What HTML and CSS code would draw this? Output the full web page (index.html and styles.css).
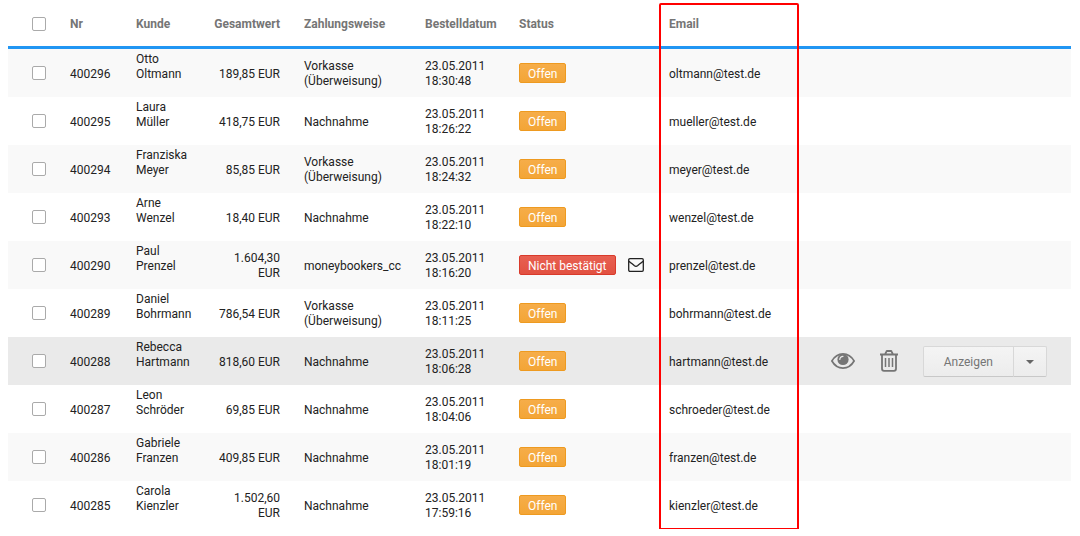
FILE: index.html
```html
<!DOCTYPE html>
<html lang="de">

<head>
    <meta charset="UTF-8">
    <meta name="viewport" content="width=device-width, initial-scale=1.0">
    <title>Bestellungen</title>
    <link rel="stylesheet" href="styles.css">
</head>

<body>
    <main class="orders">
        <table class="orders-table">
            <colgroup>
                <col class="col-check">
                <col class="col-nr">
                <col class="col-customer">
                <col class="col-total">
                <col class="col-payment">
                <col class="col-date">
                <col class="col-status">
                <col class="col-email">
                <col class="col-actions">
            </colgroup>
            <thead>
                <tr>
                    <th class="check"><input type="checkbox" aria-label="Alle auswählen"></th>
                    <th>Nr</th>
                    <th>Kunde</th>
                    <th class="total">Gesamtwert</th>
                    <th>Zahlungsweise</th>
                    <th>Bestelldatum</th>
                    <th>Status</th>
                    <th>Email</th>
                    <th></th>
                </tr>
            </thead>
            <tbody>
                <tr>
                    <td class="check"><input type="checkbox" aria-label="400296"></td>
                    <td>400296</td>
                    <td class="customer">Otto<br>Oltmann</td>
                    <td class="total">189,85 EUR</td>
                    <td>Vorkasse (Überweisung)</td>
                    <td>23.05.2011 18:30:48</td>
                    <td class="status-cell"><span class="badge badge-warning">Offen</span></td>
                    <td>oltmann@test.de</td>
                    <td></td>
                </tr>
                <tr>
                    <td class="check"><input type="checkbox" aria-label="400295"></td>
                    <td>400295</td>
                    <td class="customer">Laura<br>Müller</td>
                    <td class="total">418,75 EUR</td>
                    <td>Nachnahme</td>
                    <td>23.05.2011 18:26:22</td>
                    <td class="status-cell"><span class="badge badge-warning">Offen</span></td>
                    <td>mueller@test.de</td>
                    <td></td>
                </tr>
                <tr>
                    <td class="check"><input type="checkbox" aria-label="400294"></td>
                    <td>400294</td>
                    <td class="customer">Franziska<br>Meyer</td>
                    <td class="total">85,85 EUR</td>
                    <td>Vorkasse (Überweisung)</td>
                    <td>23.05.2011 18:24:32</td>
                    <td class="status-cell"><span class="badge badge-warning">Offen</span></td>
                    <td>meyer@test.de</td>
                    <td></td>
                </tr>
                <tr>
                    <td class="check"><input type="checkbox" aria-label="400293"></td>
                    <td>400293</td>
                    <td class="customer">Arne<br>Wenzel</td>
                    <td class="total">18,40 EUR</td>
                    <td>Nachnahme</td>
                    <td>23.05.2011 18:22:10</td>
                    <td class="status-cell"><span class="badge badge-warning">Offen</span></td>
                    <td>wenzel@test.de</td>
                    <td></td>
                </tr>
                <tr>
                    <td class="check"><input type="checkbox" aria-label="400290"></td>
                    <td>400290</td>
                    <td class="customer">Paul<br>Prenzel</td>
                    <td class="total">1.604,30 EUR</td>
                    <td>moneybookers_cc</td>
                    <td>23.05.2011 18:16:20</td>
                    <td class="status-cell">
                        <div class="status">
                            <span class="badge badge-danger">Nicht bestätigt</span>
                            <svg class="icon-mail" viewBox="0 0 16 14" aria-hidden="true">
                                <rect x="0.7" y="0.7" width="14.6" height="12.6" rx="1.2" />
                                <path d="M1 3.200C3 5 4.600 6.200 6.200 7.600C7.400 8.600 8.600 8.600 9.800 7.600C11.400 6.200 13 5 15 3.200" />
                            </svg>
                        </div>
                    </td>
                    <td>prenzel@test.de</td>
                    <td></td>
                </tr>
                <tr>
                    <td class="check"><input type="checkbox" aria-label="400289"></td>
                    <td>400289</td>
                    <td class="customer">Daniel<br>Bohrmann</td>
                    <td class="total">786,54 EUR</td>
                    <td>Vorkasse (Überweisung)</td>
                    <td>23.05.2011 18:11:25</td>
                    <td class="status-cell"><span class="badge badge-warning">Offen</span></td>
                    <td>bohrmann@test.de</td>
                    <td></td>
                </tr>
                <tr class="active">
                    <td class="check"><input type="checkbox" aria-label="400288"></td>
                    <td>400288</td>
                    <td class="customer">Rebecca<br>Hartmann</td>
                    <td class="total">818,60 EUR</td>
                    <td>Nachnahme</td>
                    <td>23.05.2011 18:06:28</td>
                    <td class="status-cell"><span class="badge badge-warning">Offen</span></td>
                    <td>hartmann@test.de</td>
                    <td class="actions-cell">
                        <div class="actions">
                            <a class="action" href="#" aria-label="Ansehen">
                                <svg class="icon-eye" viewBox="0 0 24 16" aria-hidden="true">
                                    <path class="line" d="M0.900 8C3.500 3.500 7.500 0.900 12 0.900S20.500 3.500 23.100 8C20.500 12.500 16.500 15.100 12 15.100S3.500 12.500 0.900 8Z" />
                                    <circle cx="12" cy="6.500" r="5.600" />
                                    <path class="shine" d="M8.800 6.500A3.200 3.200 0 0 1 12 3.300" />
                                </svg>
                            </a>
                            <a class="action" href="#" aria-label="Löschen">
                                <svg class="icon-trash" viewBox="0 0 20 22" aria-hidden="true">
                                    <path d="M1 4.500H19M6.200 4.200L7.200 1.800Q7.500 1 8.300 1H11.700Q12.500 1 12.800 1.800L13.800 4.200M3 4.500V18.800Q3 20.800 5 20.800H15Q17 20.800 17 18.800V4.500" />
                                    <path class="bars" d="M6.500 8V17M10 8V17M13.500 8V17" />
                                </svg>
                            </a>
                            <div class="btn-group">
                                <button class="btn" type="button">Anzeigen</button>
                                <button class="btn btn-toggle" type="button" aria-label="Mehr Aktionen"><span class="caret"></span></button>
                            </div>
                        </div>
                    </td>
                </tr>
                <tr>
                    <td class="check"><input type="checkbox" aria-label="400287"></td>
                    <td>400287</td>
                    <td class="customer">Leon<br>Schröder</td>
                    <td class="total">69,85 EUR</td>
                    <td>Nachnahme</td>
                    <td>23.05.2011 18:04:06</td>
                    <td class="status-cell"><span class="badge badge-warning">Offen</span></td>
                    <td>schroeder@test.de</td>
                    <td></td>
                </tr>
                <tr>
                    <td class="check"><input type="checkbox" aria-label="400286"></td>
                    <td>400286</td>
                    <td class="customer">Gabriele<br>Franzen</td>
                    <td class="total">409,85 EUR</td>
                    <td>Nachnahme</td>
                    <td>23.05.2011 18:01:19</td>
                    <td class="status-cell"><span class="badge badge-warning">Offen</span></td>
                    <td>franzen@test.de</td>
                    <td></td>
                </tr>
                <tr>
                    <td class="check"><input type="checkbox" aria-label="400285"></td>
                    <td>400285</td>
                    <td class="customer">Carola<br>Kienzler</td>
                    <td class="total">1.502,60 EUR</td>
                    <td>Nachnahme</td>
                    <td>23.05.2011 17:59:16</td>
                    <td class="status-cell"><span class="badge badge-warning">Offen</span></td>
                    <td>kienzler@test.de</td>
                    <td></td>
                </tr>
            </tbody>
        </table>
        <div class="highlight"></div>
    </main>
</body>

</html>
```
FILE: styles.css
```css
* {
    box-sizing: border-box;
}

body {
    margin: 0;
    background: #fff;
    color: #222;
    font-family: Roboto, "Liberation Sans", sans-serif;
    font-size: 12px;
    line-height: 15px;
}

.orders {
    position: relative;
    margin: 0 9px 0 8px;
}

.orders-table {
    width: 100%;
    table-layout: fixed;
    border-collapse: separate;
    border-spacing: 0;
}

.col-check {
    width: 50px;
}

.col-nr {
    width: 66px;
}

.col-customer {
    width: 78px;
}

.col-total {
    width: 90px;
}

.col-payment {
    width: 121px;
}

.col-date {
    width: 94px;
}

.col-status,
.col-email {
    width: 150px;
}

th,
td {
    padding: 2px 12px 0;
    text-align: left;
    vertical-align: middle;
}

th {
    height: 49px;
    border-bottom: 3px solid #2196f3;
    color: #757575;
    font-weight: bold;
}

td {
    height: 48px;
}

tbody tr:nth-child(odd) {
    background: #f9f9f9;
}

tbody tr.active {
    background: #eaeaea;
}

.check {
    padding: 0 0 0 24px;
}

th.check {
    padding-top: 2px;
}

.check input {
    display: block;
    appearance: none;
    width: 14px;
    height: 14px;
    margin: 0;
    border: 1px solid #aaa;
    border-radius: 2px;
    background: #fff;
}

.check input:checked {
    background: #2196f3;
}

td.customer {
    padding-bottom: 15px;
}

.total {
    text-align: right;
}

.status-cell {
    padding-top: 0;
}

.status {
    display: flex;
    align-items: center;
    gap: 12px;
}

.badge {
    display: block;
    width: fit-content;
    padding: 3px 8px 0;
    border: 1px solid;
    border-radius: 2px;
    color: #fff;
    white-space: nowrap;
}

.badge-warning {
    border-color: #ee9a20;
    background: linear-gradient(#f6ad49, #f3a536);
}

.badge-danger {
    border-color: #d93a2b;
    background: linear-gradient(#e86052, #e25141);
}

.icon-mail {
    width: 16px;
    height: 14px;
    fill: none;
    stroke: #222;
    stroke-width: 1.3;
}

.actions-cell {
    padding: 0 24px 0 12px;
}

.actions {
    display: flex;
    align-items: center;
    justify-content: flex-end;
    gap: 24px;
}

.action {
    display: flex;
}

.icon-eye {
    width: 24px;
    height: 16px;
    fill: #757575;
}

.icon-eye .line {
    fill: none;
    stroke: #757575;
    stroke-width: 1.7;
}

.icon-eye .shine {
    fill: none;
    stroke: #eaeaea;
    stroke-width: 1.2;
    stroke-linecap: round;
}

.icon-trash {
    width: 20px;
    height: 22px;
    fill: none;
    stroke: #757575;
    stroke-width: 1.8;
}

.icon-trash .bars {
    stroke-width: 1.5;
}

.btn-group {
    display: flex;
}

.btn {
    height: 31px;
    padding: 2px 20px 0;
    border: 1px solid #d8d8d8;
    border-bottom-color: #c8c8c8;
    border-radius: 2px 0 0 2px;
    background: linear-gradient(#f4f4f4, #ececec);
    color: #757575;
    font: inherit;
    cursor: pointer;
}

.btn-toggle {
    margin-left: -1px;
    padding: 2px 12px 0;
    border-radius: 0 2px 2px 0;
}

.caret {
    display: block;
    border: 4px solid transparent;
    border-top-color: #666;
    border-bottom: 0;
}

/* frame around the email column */
.highlight {
    position: absolute;
    top: 3px;
    bottom: -1px;
    left: 651px;
    width: 140px;
    border: 2px solid #f00;
    border-radius: 2px 2px 0 0;
    pointer-events: none;
}
```
